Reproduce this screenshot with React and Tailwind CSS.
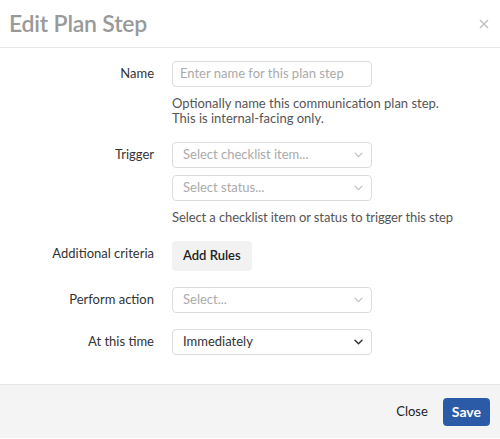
import React from "react";

const Chevron = ({ dark }) => (
  <svg
    width="9"
    height="6"
    viewBox="0 0 9 6"
    fill="none"
    className={dark ? "text-[#333]" : "text-[#bbb]"}
  >
    <path
      d="M1 1.2l3.5 3.5 3.5-3.5"
      stroke="currentColor"
      strokeWidth={dark ? 1.5 : 1.1}
      strokeLinecap="round"
      strokeLinejoin="round"
    />
  </svg>
);

const FakeSelect = ({ text, dark }) => (
  <div className="flex h-[26px] w-[200px] items-center justify-between rounded-[4px] border border-[#dcdcdc] bg-white pl-[10px] pr-[8px]">
    <span className={dark ? "text-[#333]" : "text-[#aaa]"}>{text}</span>
    <Chevron dark={dark} />
  </div>
);

const Row = ({ label, children, className = "" }) => (
  <div className={`grid grid-cols-[154px_200px] gap-x-[18px] ${className}`}>
    <div className="flex h-[26px] items-center justify-end text-[#333]">
      {label}
    </div>
    <div>{children}</div>
  </div>
);

export default function App() {
  return (
    <div
      className="flex h-[439px] w-[500px] flex-col bg-white text-[13px]"
      style={{ fontFamily: "Lato, 'Open Sans', sans-serif" }}
    >
      {/* Header */}
      <div className="flex h-[48px] items-center justify-between border-b border-[#e8e8e8] pl-[9px] pr-[11px]">
        <h1 className="text-[23px] font-semibold tracking-[-0.2px] text-[#999]">
          Edit Plan Step
        </h1>
        <svg width="10" height="10" viewBox="0 0 10 10" className="text-[#c4c4c4]">
          <path d="M1 1l8 8M9 1l-8 8" stroke="currentColor" strokeWidth="1.6" />
        </svg>
      </div>

      {/* Body */}
      <div className="flex flex-1 flex-col gap-[16px] pt-[13px]">
        <Row label="Name">
          <div className="flex h-[26px] w-[200px] items-center rounded-[4px] border border-[#dcdcdc] px-[7px] text-[#aaa]">
            Enter name for this plan step
          </div>
          <p className="mt-[9px] w-[280px] leading-[15px] text-[#555]">
            Optionally name this communication plan step.
            <br />
            This is internal-facing only.
          </p>
        </Row>

        <Row label="Trigger">
          <div className="flex flex-col gap-[7px]">
            <FakeSelect text="Select checklist item..." />
            <FakeSelect text="Select status..." />
          </div>
          <p className="mt-[9px] w-[300px] whitespace-nowrap leading-[15px] tracking-[-0.1px] text-[#555]">
            Select a checklist item or status to trigger this step
          </p>
        </Row>

        <Row label="Additional criteria" className="items-start">
          <button className="flex h-[30px] items-center rounded-[4px] bg-[#f2f2f2] px-[11px] font-semibold text-[#222]">
            Add Rules
          </button>
        </Row>

        <Row label="Perform action">
          <FakeSelect text="Select..." />
        </Row>

        <Row label="At this time">
          <FakeSelect text="Immediately" dark />
        </Row>
      </div>

      {/* Footer */}
      <div className="mb-[1px] flex h-[54px] items-center justify-end gap-[15px] border-t border-[#e5e5e5] bg-[#f4f4f4] pr-[10px]">
        <button className="text-[13px] text-[#222]">Close</button>
        <button className="h-[28px] rounded-[4px] bg-[#2b5ba6] px-[9px] text-[14px] font-bold text-white">
          Save
        </button>
      </div>
    </div>
  );
}
